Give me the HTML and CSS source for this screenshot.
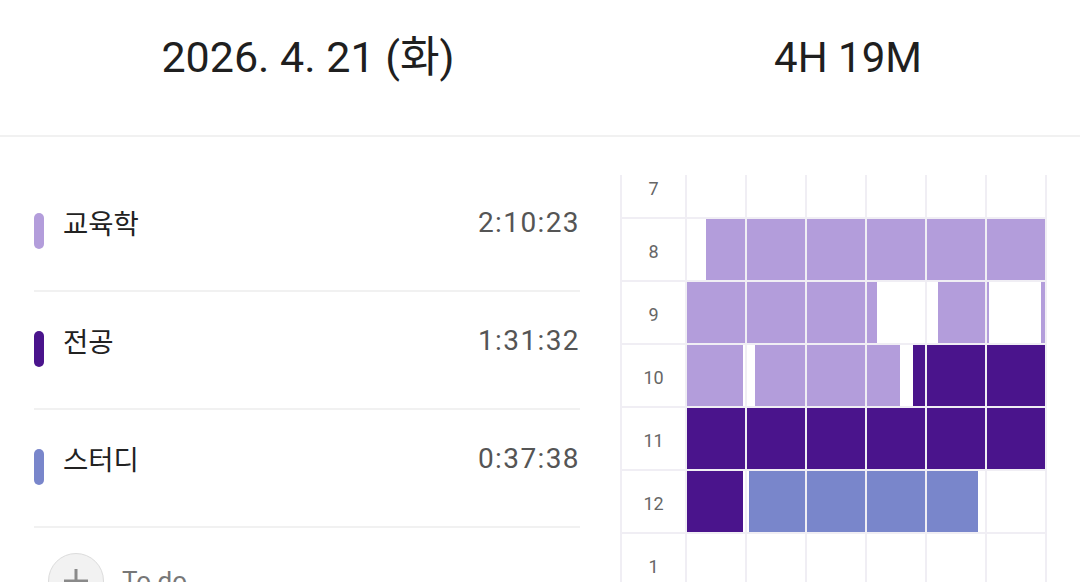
FILE: index.html
```html
<!DOCTYPE html>
<html lang="ko">
<head>
<meta charset="utf-8">
<title>Study log</title>
<link rel="stylesheet" href="styles.css">
</head>
<body>
<header class="top">
  <div class="top-date">2026. 4. 21 (화)</div>
  <div class="top-total">4H 19M</div>
</header>
<main class="main">
  <section class="subjects">
    <div class="subject">
      <span class="swatch c-edu"></span>
      <span class="subject-name">교육학</span>
      <span class="subject-time">2:10:23</span>
    </div>
    <div class="subject">
      <span class="swatch c-major"></span>
      <span class="subject-name">전공</span>
      <span class="subject-time">1:31:32</span>
    </div>
    <div class="subject">
      <span class="swatch c-study"></span>
      <span class="subject-name">스터디</span>
      <span class="subject-time">0:37:38</span>
    </div>
    <div class="todo">
      <span class="todo-btn">
        <svg width="30" height="30" viewBox="0 0 30 30"><path d="M15 3v24M3 15h24" stroke="#8a8a8a" stroke-width="3" fill="none"/></svg>
      </span>
      <span class="todo-label">To do</span>
    </div>
  </section>
  <section class="timetable">
    <div class="tt-grid">
      <div class="hour">7</div>
      <div class="cell"></div><div class="cell"></div><div class="cell"></div><div class="cell"></div><div class="cell"></div><div class="cell"></div>

      <div class="hour">8</div>
      <div class="cell"><i class="seg c-edu" style="margin-left:33%;width:67%"></i></div>
      <div class="cell"><i class="seg c-edu" style="width:100%"></i></div>
      <div class="cell"><i class="seg c-edu" style="width:100%"></i></div>
      <div class="cell"><i class="seg c-edu" style="width:100%"></i></div>
      <div class="cell"><i class="seg c-edu" style="width:100%"></i></div>
      <div class="cell"><i class="seg c-edu" style="width:100%"></i></div>

      <div class="hour">9</div>
      <div class="cell"><i class="seg c-edu" style="width:100%"></i></div>
      <div class="cell"><i class="seg c-edu" style="width:100%"></i></div>
      <div class="cell"><i class="seg c-edu" style="width:100%"></i></div>
      <div class="cell"><i class="seg c-edu" style="width:17%"></i></div>
      <div class="cell"><i class="seg c-edu" style="margin-left:19%;width:81%"></i></div>
      <div class="cell"><i class="seg c-edu" style="width:4%"></i><i class="seg c-edu" style="margin-left:89%;width:7%"></i></div>

      <div class="hour">10</div>
      <div class="cell"><i class="seg c-edu" style="width:96%"></i></div>
      <div class="cell"><i class="seg c-edu" style="margin-left:14%;width:86%"></i></div>
      <div class="cell"><i class="seg c-edu" style="width:100%"></i></div>
      <div class="cell"><i class="seg c-edu" style="width:57%"></i><i class="seg c-major" style="margin-left:22%;width:21%"></i></div>
      <div class="cell"><i class="seg c-major" style="width:100%"></i></div>
      <div class="cell"><i class="seg c-major" style="width:100%"></i></div>

      <div class="hour">11</div>
      <div class="cell"><i class="seg c-major" style="width:100%"></i></div>
      <div class="cell"><i class="seg c-major" style="width:100%"></i></div>
      <div class="cell"><i class="seg c-major" style="width:100%"></i></div>
      <div class="cell"><i class="seg c-major" style="width:100%"></i></div>
      <div class="cell"><i class="seg c-major" style="width:100%"></i></div>
      <div class="cell"><i class="seg c-major" style="width:100%"></i></div>

      <div class="hour">12</div>
      <div class="cell"><i class="seg c-major" style="width:96%"></i></div>
      <div class="cell"><i class="seg c-study" style="margin-left:4%;width:96%"></i></div>
      <div class="cell"><i class="seg c-study" style="width:100%"></i></div>
      <div class="cell"><i class="seg c-study" style="width:100%"></i></div>
      <div class="cell"><i class="seg c-study" style="width:88%"></i></div>
      <div class="cell"></div>

      <div class="hour">1</div>
      <div class="cell"></div><div class="cell"></div><div class="cell"></div><div class="cell"></div><div class="cell"></div><div class="cell"></div>
    </div>
  </section>
</main>
</body>
</html>
```

FILE: styles.css
```css
* { box-sizing: border-box; }

html, body {
  margin: 0;
  padding: 0;
  background: #ffffff;
  font-family: Roboto, "Noto Sans CJK KR", sans-serif;
  color: #212121;
  overflow: hidden;
  height: 582px;
}

.top {
  display: grid;
  grid-template-columns: 616px 464px;
  height: 137px;
  border-bottom: 2px solid #f1f1f1;
  padding-top: 33px;
  font-size: 43px;
  line-height: 49px;
  color: #1f1f1f;
}

.top-date, .top-total {
  text-align: center;
}

.top-total {
  font-size: 42px;
}

.main {
  display: flex;
  gap: 40px;
}

.subjects {
  width: 580px;
  padding-left: 34px;
  padding-top: 37px;
  display: flex;
  flex-direction: column;
}

.subject {
  display: flex;
  align-items: flex-start;
  height: 118px;
  padding-top: 39px;
  border-bottom: 2px solid #f1f1f1;
}

.swatch {
  width: 10px;
  height: 36px;
  border-radius: 5px;
  flex: none;
}

.subject-name {
  margin-left: 19px;
  font-size: 27.5px;
  line-height: 26px;
  margin-top: -4px;
  color: #222;
  font-family: "Noto Sans CJK KR", sans-serif;
}

.subject-time {
  margin-left: auto;
  font-size: 28px;
  line-height: 26px;
  margin-top: -3px;
  letter-spacing: 1.4px;
  color: #555;
}

.todo {
  display: flex;
  align-items: center;
  padding-top: 25px;
  padding-left: 14px;
}

.todo-btn {
  width: 56px;
  height: 56px;
  border-radius: 50%;
  background: #f2f2f2;
  border: 1.5px solid #dcdcdc;
  display: flex;
  align-items: center;
  justify-content: center;
}

.todo-label {
  margin-left: 18px;
  font-size: 26px;
  color: #777;
}

.c-edu { background: #b39ddb; }
.c-major { background: #4a148c; }
.c-study { background: #7986cb; }

.timetable {
  margin-top: 38px;
  height: 420px;
  overflow: hidden;
}

.tt-grid {
  margin-top: -19px;
  display: grid;
  grid-template-columns: 63px repeat(6, 58px);
  grid-auto-rows: 61px;
  gap: 2px;
  padding: 0 2px;
  background: #f0eef4;
  width: 427px;
}

.hour {
  background: #ffffff;
  display: flex;
  align-items: center;
  justify-content: center;
  font-size: 18px;
  color: #666;
  padding-top: 4px;
}

.cell {
  background: #ffffff;
  display: flex;
}

.seg {
  display: block;
  height: 100%;
  flex: none;
}
```
